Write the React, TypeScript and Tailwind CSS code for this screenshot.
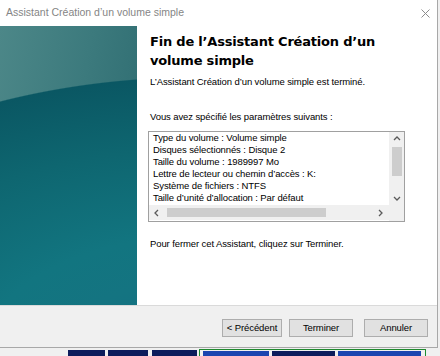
import React from "react";

const body = "font-['Liberation_Sans',Arial,sans-serif]";

const lines = [
  "Type du volume : Volume simple",
  "Disques sélectionnés : Disque 2",
  "Taille du volume : 1989997 Mo",
  "Lettre de lecteur ou chemin d’accès : K:",
  "Système de fichiers : NTFS",
  "Taille d’unité d’allocation : Par défaut",
  "Nom du volume : Nouveau nom",
];

function Chevron({ dir }: { dir: "up" | "down" | "left" | "right" }) {
  const pts = {
    up: "1,5 4,2 7,5",
    down: "1,2 4,5 7,2",
    left: "5,1 2,4 5,7",
    right: "2,1 5,4 2,7",
  }[dir];
  return (
    <svg width="8" height="8" viewBox="0 0 8 8">
      <polyline points={pts} fill="none" stroke="#5a5a5a" strokeWidth="1.3" />
    </svg>
  );
}

function Btn({ label, w }: { label: string; w: string }) {
  return (
    <div
      className={`${w} h-[18px] flex items-center justify-center bg-[#e1e1e1] border border-[#adadad] text-[9.5px] tracking-[-0.1px] text-black`}
    >
      {label}
    </div>
  );
}

export default function App() {
  return (
    <div className={`w-[440px] h-[356px] bg-[#f0f0f0] overflow-hidden flex flex-col ${body}`}>
      <div className="w-[438px] h-[348px] flex flex-col bg-white border-r border-b border-[#a8a8a8]">
        {/* title bar */}
        <div className="h-[26px] flex items-center justify-between pl-[6px] pr-[7px]">
          <span className="text-[10.5px] text-[#858585]">Assistant Création d’un volume simple</span>
          <svg width="9" height="9" viewBox="0 0 9 9">
            <path d="M0.5 0.5 L8.5 8.5 M8.5 0.5 L0.5 8.5" stroke="#8c8c8c" strokeWidth="1" />
          </svg>
        </div>

        <div className="flex h-[279px]">
          {/* banner */}
          <div className="w-[137px] h-full bg-[radial-gradient(ellipse_500px_291px_at_200px_341px,#146a80_0%,#147481_30%,#127580_45%,#0e6670_75%,#0a5763_99.4%,transparent_99.8%),linear-gradient(100deg,#4c8788_0%,#3c7a7d_50%,#2c6a6f_100%)]" />

          {/* content */}
          <div className="flex-1 pl-[13px] pt-[6px] flex flex-col">
            <h1 className="font-['DejaVu_Sans',Verdana,sans-serif] font-bold text-[13px] leading-[19px] tracking-[-0.2px] text-black">
              Fin de l’Assistant Création d’un
              <br />
              volume simple
            </h1>
            <p className="mt-[6px] text-[9.5px] leading-[12px] tracking-[-0.1px] text-black">
              L’Assistant Création d’un volume simple est terminé.
            </p>
            <p className="mt-[23px] text-[9.5px] leading-[12px] tracking-[-0.1px] text-black">
              Vous avez spécifié les paramètres suivants :
            </p>

            {/* listbox */}
            <div className="mt-[8px] -ml-[2px] w-[257px] h-[91px] border border-[#a0a0a0] flex">
              <div className="flex-1 flex flex-col">
                <div className="h-[73px] overflow-hidden pl-[4px] text-[9.5px] leading-[12px] tracking-[-0.1px] text-black">
                  {lines.map((l) => (
                    <div key={l} className="whitespace-nowrap">{l}</div>
                  ))}
                </div>
                <div className="h-[15px] bg-[#f0f0f0] flex items-center">
                  <div className="w-[16px] flex justify-center"><Chevron dir="left" /></div>
                  <div className="flex-1 h-full flex items-center pl-[2px] pr-[47px]">
                    <div className="h-[9px] w-full bg-[#cdcdcd]" />
                  </div>
                  <div className="w-[16px] flex justify-center"><Chevron dir="right" /></div>
                </div>
              </div>
              <div className="w-[15px] flex flex-col bg-[#f0f0f0]">
                <div className="h-[14px] flex items-center justify-center"><Chevron dir="up" /></div>
                <div className="flex-1 flex flex-col items-center pt-[1px]">
                  <div className="w-[10px] h-[29px] bg-[#cdcdcd]" />
                </div>
                <div className="h-[14px] flex items-center justify-center"><Chevron dir="down" /></div>
                <div className="h-[15px] bg-[#f0f0f0]" />
              </div>
            </div>

            <p className="mt-[16px] text-[9.5px] leading-[12px] tracking-[-0.1px] text-black">
              Pour fermer cet Assistant, cliquez sur Terminer.
            </p>
          </div>
        </div>

        {/* footer */}
        <div className="flex-1 bg-[#f0f0f0] border-t border-[#dadada] flex justify-end items-start pt-[13px] pr-[9px]">
          <Btn label="< Précédent" w="w-[60px]" />
          <div className="w-[7px]" />
          <Btn label="Terminer" w="w-[64px]" />
          <div className="w-[11px]" />
          <Btn label="Annuler" w="w-[64px]" />
        </div>
      </div>

      {/* taskbar strip below */}
      <div className="flex-1 flex items-end pb-0">
        <div className="ml-[68px] w-[37px] h-[6px] bg-[#0d1c5c]" />
        <div className="ml-[3px] w-[40px] h-[6px] bg-[#0d1c5c]" />
        <div className="ml-[4px] w-[45px] h-[6px] bg-[#0d1c5c]" />
        <div className="ml-[2px] w-[227px] h-[7px] border-t border-x border-[#1e8a2e] flex gap-[3px] pl-[3px] pt-[1px]">
          <div className="w-[66px] h-full bg-[#1b45b0]" />
          <div className="w-[63px] h-full bg-[#0d1c5c]" />
          <div className="w-[83px] h-full bg-[#1b45b0]" />
        </div>
      </div>
    </div>
  );
}
